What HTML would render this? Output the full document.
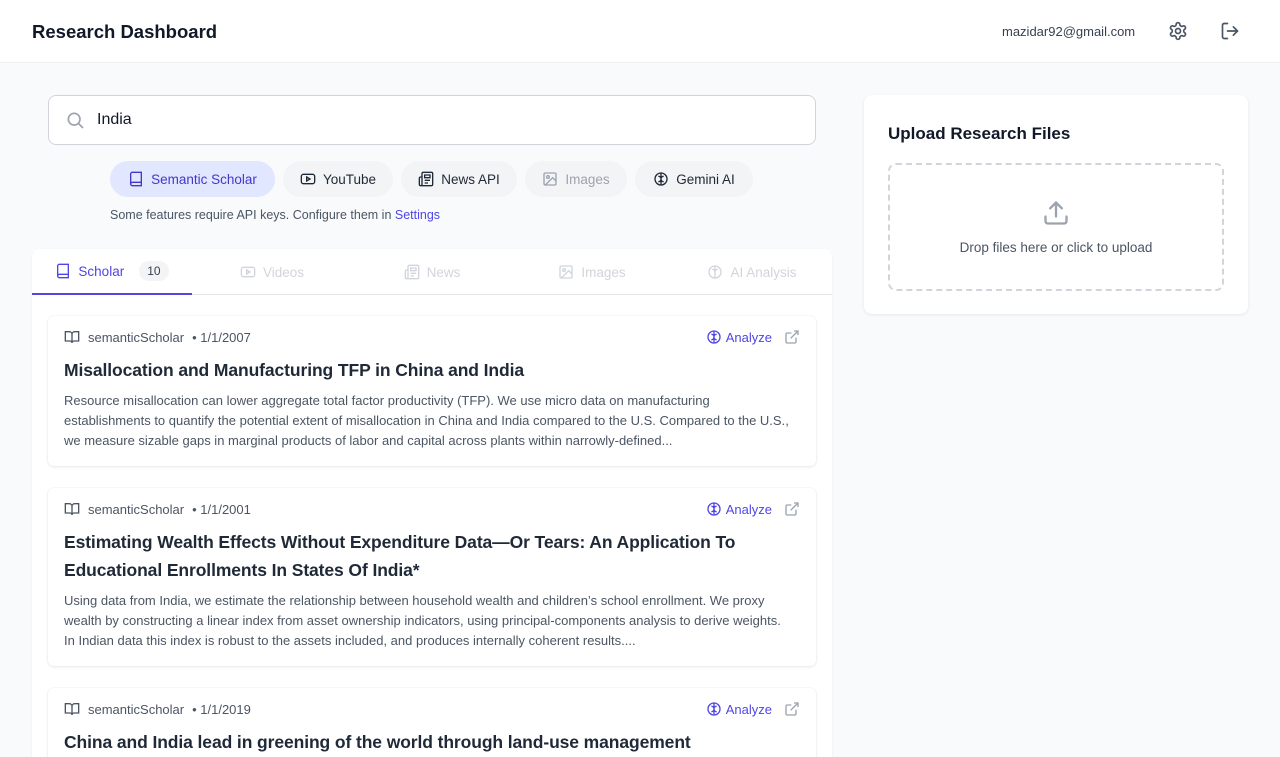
<!DOCTYPE html>
<html><head><meta charset="utf-8"><style>
*{box-sizing:border-box;margin:0;padding:0}
html,body{width:1280px;height:757px;overflow:hidden}
body{background:#f9fafb;font-family:"Liberation Sans",sans-serif;color:#111827;position:relative}
.hdr{position:absolute;left:0;top:0;width:1280px;height:63px;background:#fff;border-bottom:1px solid #eceef1}
.hdr h1{position:absolute;left:32px;top:21px;font-size:18.5px;font-weight:700;color:#111827}
.email{position:absolute;left:1002px;top:24px;font-size:13px;color:#374151}
svg{display:block}
.ic{position:absolute}
.search{position:absolute;left:48px;top:95px;width:768px;height:50px;background:#fff;border:1px solid #d1d5db;border-radius:8px}
.search span{position:absolute;left:48px;top:15px;font-size:16px;color:#111827}
.pill{position:absolute;top:161px;height:36px;border-radius:18px;background:#f3f4f6;font-size:13.5px;color:#1f2937;display:flex;align-items:center;justify-content:center;gap:7px;white-space:nowrap}
.pill.act{background:#e0e7ff;color:#4338ca}
.pill.dis{color:#9ca3af}
.note{position:absolute;left:110px;top:208px;font-size:12.5px;color:#4b5563}
.note a{color:#4f46e5;text-decoration:none}
.panel{position:absolute;left:32px;top:249px;width:800px;height:508px;background:#fff;border-radius:8px 8px 0 0;box-shadow:0 1px 2px rgba(0,0,0,.06);overflow:hidden}
.tabs{position:absolute;left:0;top:0;width:800px;height:46px;border-bottom:1px solid #e5e7eb}
.tab{position:absolute;top:0;width:160px;height:46px;display:flex;align-items:center;justify-content:center;gap:7px;font-size:13.5px;color:#d1d5db;white-space:nowrap}
.tab.act{color:#4f46e5;border-bottom:2px solid #4f46e5}
.badge{background:#f3f4f6;color:#374151;font-size:12px;border-radius:10px;padding:3px 8px;margin-left:8px}
.card{position:absolute;left:16px;width:768px;background:#fff;border-radius:6px;box-shadow:0 1px 3px rgba(0,0,0,.08),0 0 0 1px rgba(0,0,0,.02)}
.meta{position:absolute;left:16px;top:13px;font-size:13px;color:#4b5563;display:flex;align-items:center;gap:8px}
.an{position:absolute;right:44px;top:13px;font-size:13px;color:#4f46e5;display:flex;align-items:center;gap:4px}
.ext{position:absolute;right:16px;top:13px}
.title{position:absolute;left:16px;font-size:17.5px;font-weight:700;color:#1f2937;line-height:28px;width:730px;letter-spacing:-0.1px}
.abs{position:absolute;left:16px;font-size:13px;color:#4b5563;line-height:20px;width:728px}
.up{position:absolute;left:864px;top:95px;width:384px;height:219px;background:#fff;border-radius:8px;box-shadow:0 1px 3px rgba(0,0,0,.08)}
.up h2{position:absolute;left:24px;top:29px;font-size:17px;font-weight:700}
.drop{position:absolute;left:24px;top:68px;width:336px;height:128px;border:2px dashed #d1d5db;border-radius:8px}
.drop span{position:absolute;left:0;width:100%;top:75px;text-align:center;font-size:13.5px;color:#4b5563}
</style></head><body>
<div class="hdr"><h1>Research Dashboard</h1>
<div class="email">mazidar92@gmail.com</div>
<svg class="ic" style="left:1168px;top:21px" width="20" height="20" viewBox="0 0 24 24" fill="none" stroke="#4b5563" stroke-width="2" stroke-linecap="round" stroke-linejoin="round"><path d="M12.22 2h-.44a2 2 0 0 0-2 2v.18a2 2 0 0 1-1 1.73l-.43.25a2 2 0 0 1-2 0l-.15-.08a2 2 0 0 0-2.730.73l-.22.38a2 2 0 0 0 .73 2.730l.15.1a2 2 0 0 1 1 1.72v.51a2 2 0 0 1-1 1.74l-.15.09a2 2 0 0 0-.73 2.73l.22.38a2 2 0 0 0 2.73.73l.15-.08a2 2 0 0 1 2 0l.43.25a2 2 0 0 1 1 1.73V20a2 2 0 0 0 2 2h.44a2 2 0 0 0 2-2v-.18a2 2 0 0 1 1-1.73l.43-.25a2 2 0 0 1 2 0l.15.08a2 2 0 0 0 2.73-.73l.22-.39a2 2 0 0 0-.73-2.73l-.15-.08a2 2 0 0 1-1-1.74v-.5a2 2 0 0 1 1-1.74l.15-.09a2 2 0 0 0 .73-2.730l-.22-.38a2 2 0 0 0-2.73-.73l-.15.08a2 2 0 0 1-2 0l-.43-.25a2 2 0 0 1-1-1.73V4a2 2 0 0 0-2-2z"/><circle cx="12" cy="12" r="3"/></svg>
<svg class="ic" style="left:1220px;top:21px" width="20" height="20" viewBox="0 0 24 24" fill="none" stroke="#4b5563" stroke-width="2" stroke-linecap="round" stroke-linejoin="round"><path d="M9 21H5a2 2 0 0 1-2-2V5a2 2 0 0 1 2-2h4"/><path d="M16 17l5-5-5-5"/><path d="M21 12H9"/></svg>
</div>

<div class="search"><svg class="ic" style="left:16px;top:14px" width="20" height="20" viewBox="0 0 24 24" fill="none" stroke="#9ca3af" stroke-width="2" stroke-linecap="round"><circle cx="11" cy="11" r="7"/><path d="M21 21l-4.3-4.3"/></svg><span>India</span></div>

<div class="pill act" style="left:110px;width:165px"><svg width="16" height="16" viewBox="0 0 24 24" fill="none" stroke="#4338ca" stroke-width="2"><path d="M4 19.5V4.5A2.5 2.5 0 0 1 6.5 2H20v20H6.5A2.5 2.5 0 0 1 4 19.5zM4 19.5A2.5 2.5 0 0 1 6.5 17H20"/></svg>Semantic Scholar</div>
<div class="pill" style="left:283px;width:110px"><svg width="16" height="16" viewBox="0 0 24 24" fill="none" stroke="#1f2937" stroke-width="2"><rect x="2" y="5" width="20" height="14" rx="3"/><path d="M10 9l5 3-5 3z"/></svg>YouTube</div>
<div class="pill" style="left:401px;width:116px"><svg width="16" height="16" viewBox="0 0 24 24" fill="none" stroke="#1f2937" stroke-width="2"><path d="M4 22h16a2 2 0 0 0 2-2V4a2 2 0 0 0-2-2H8a2 2 0 0 0-2 2v16a2 2 0 0 1-4 0V11a2 2 0 0 1 2-2h2M18 14h-8M15 18h-5M10 6h8v4h-8z"/></svg>News API</div>
<div class="pill dis" style="left:525px;width:102px"><svg width="16" height="16" viewBox="0 0 24 24" fill="none" stroke="#9ca3af" stroke-width="2"><rect x="3" y="3" width="18" height="18" rx="2"/><circle cx="9" cy="9" r="2"/><path d="M21 15l-5-5L5 21"/></svg>Images</div>
<div class="pill" style="left:635px;width:118px"><svg width="16" height="16" viewBox="0 0 24 24" fill="none" stroke="#1f2937" stroke-width="2"><circle cx="12" cy="12" r="9"/><path d="M12 3v18M8 8c2 0 4 1 4 4M16 8c-2 0-4 1-4 4M8 16c2 0 4-1 4-4M16 16c-2 0-4-1-4-4"/></svg>Gemini AI</div>
<div class="note">Some features require API keys. Configure them in <a>Settings</a></div>

<div class="panel">
<div class="tabs">
<div class="tab act" style="left:0"><svg width="16" height="16" viewBox="0 0 24 24" fill="none" stroke="#4f46e5" stroke-width="2"><path d="M4 19.5V4.5A2.5 2.5 0 0 1 6.5 2H20v20H6.5A2.5 2.5 0 0 1 4 19.5zM4 19.5A2.5 2.5 0 0 1 6.5 17H20"/></svg>Scholar<span class="badge">10</span></div>
<div class="tab" style="left:160px"><svg width="16" height="16" viewBox="0 0 24 24" fill="none" stroke="#d1d5db" stroke-width="2"><rect x="2" y="5" width="20" height="14" rx="3"/><path d="M10 9l5 3-5 3z"/></svg>Videos</div>
<div class="tab" style="left:320px"><svg width="16" height="16" viewBox="0 0 24 24" fill="none" stroke="#d1d5db" stroke-width="2"><path d="M4 22h16a2 2 0 0 0 2-2V4a2 2 0 0 0-2-2H8a2 2 0 0 0-2 2v16a2 2 0 0 1-4 0V11a2 2 0 0 1 2-2h2M18 14h-8M15 18h-5M10 6h8v4h-8z"/></svg>News</div>
<div class="tab" style="left:480px"><svg width="16" height="16" viewBox="0 0 24 24" fill="none" stroke="#d1d5db" stroke-width="2"><rect x="3" y="3" width="18" height="18" rx="2"/><circle cx="9" cy="9" r="2"/><path d="M21 15l-5-5L5 21"/></svg>Images</div>
<div class="tab" style="left:640px"><svg width="16" height="16" viewBox="0 0 24 24" fill="none" stroke="#d1d5db" stroke-width="2"><circle cx="12" cy="12" r="9"/><path d="M12 3v18M8 8c2 0 4 1 4 4M16 8c-2 0-4 1-4 4"/></svg>AI Analysis</div>
</div>

<div class="card" style="top:67px;height:150px">
<div class="meta"><svg width="16" height="16" viewBox="0 0 24 24" fill="none" stroke="#4b5563" stroke-width="2"><path d="M2 4h6a4 4 0 0 1 4 4v13a3 3 0 0 0-3-3H2zM22 4h-6a4 4 0 0 0-4 4v13a3 3 0 0 1 3-3h7z"/></svg>semanticScholar <span>• 1/1/2007</span></div>
<div class="an"><svg width="16" height="16" viewBox="0 0 24 24" fill="none" stroke="#4f46e5" stroke-width="2"><circle cx="12" cy="12" r="9"/><path d="M12 3v18M8 8c2 0 4 1 4 4M16 8c-2 0-4 1-4 4M8 16c2 0 4-1 4-4M16 16c-2 0-4-1-4-4"/></svg>Analyze</div>
<svg class="ext" width="16" height="16" viewBox="0 0 24 24" fill="none" stroke="#9ca3af" stroke-width="2"><path d="M18 13v6a2 2 0 0 1-2 2H5a2 2 0 0 1-2-2V8a2 2 0 0 1 2-2h6M15 3h6v6M10 14L21 3"/></svg>
<div class="title" style="top:40px">Misallocation and Manufacturing TFP in China and India</div>
<div class="abs" style="top:75px">Resource misallocation can lower aggregate total factor productivity (TFP). We use micro data on manufacturing establishments to quantify the potential extent of misallocation in China and India compared to the U.S. Compared to the U.S., we measure sizable gaps in marginal products of labor and capital across plants within narrowly-defined...</div>
</div>

<div class="card" style="top:239px;height:178px">
<div class="meta"><svg width="16" height="16" viewBox="0 0 24 24" fill="none" stroke="#4b5563" stroke-width="2"><path d="M2 4h6a4 4 0 0 1 4 4v13a3 3 0 0 0-3-3H2zM22 4h-6a4 4 0 0 0-4 4v13a3 3 0 0 1 3-3h7z"/></svg>semanticScholar <span>• 1/1/2001</span></div>
<div class="an"><svg width="16" height="16" viewBox="0 0 24 24" fill="none" stroke="#4f46e5" stroke-width="2"><circle cx="12" cy="12" r="9"/><path d="M12 3v18M8 8c2 0 4 1 4 4M16 8c-2 0-4 1-4 4M8 16c2 0 4-1 4-4M16 16c-2 0-4-1-4-4"/></svg>Analyze</div>
<svg class="ext" width="16" height="16" viewBox="0 0 24 24" fill="none" stroke="#9ca3af" stroke-width="2"><path d="M18 13v6a2 2 0 0 1-2 2H5a2 2 0 0 1-2-2V8a2 2 0 0 1 2-2h6M15 3h6v6M10 14L21 3"/></svg>
<div class="title" style="top:40px">Estimating Wealth Effects Without Expenditure Data—Or Tears: An Application To Educational Enrollments In States Of India*</div>
<div class="abs" style="top:103px">Using data from India, we estimate the relationship between household wealth and children’s school enrollment. We proxy wealth by constructing a linear index from asset ownership indicators, using principal-components analysis to derive weights. In Indian data this index is robust to the assets included, and produces internally coherent results....</div>
</div>

<div class="card" style="top:439px;height:120px">
<div class="meta"><svg width="16" height="16" viewBox="0 0 24 24" fill="none" stroke="#4b5563" stroke-width="2"><path d="M2 4h6a4 4 0 0 1 4 4v13a3 3 0 0 0-3-3H2zM22 4h-6a4 4 0 0 0-4 4v13a3 3 0 0 1 3-3h7z"/></svg>semanticScholar <span>• 1/1/2019</span></div>
<div class="an"><svg width="16" height="16" viewBox="0 0 24 24" fill="none" stroke="#4f46e5" stroke-width="2"><circle cx="12" cy="12" r="9"/><path d="M12 3v18M8 8c2 0 4 1 4 4M16 8c-2 0-4 1-4 4M8 16c2 0 4-1 4-4M16 16c-2 0-4-1-4-4"/></svg>Analyze</div>
<svg class="ext" width="16" height="16" viewBox="0 0 24 24" fill="none" stroke="#9ca3af" stroke-width="2"><path d="M18 13v6a2 2 0 0 1-2 2H5a2 2 0 0 1-2-2V8a2 2 0 0 1 2-2h6M15 3h6v6M10 14L21 3"/></svg>
<div class="title" style="top:40px">China and India lead in greening of the world through land-use management</div>
</div>
</div>

<div class="up"><h2>Upload Research Files</h2>
<div class="drop"><svg class="ic" style="left:152px;top:34px" width="28" height="28" viewBox="0 0 24 24" fill="none" stroke="#9ca3af" stroke-width="2" stroke-linecap="round" stroke-linejoin="round"><path d="M21 15v4a2 2 0 0 1-2 2H5a2 2 0 0 1-2-2v-4M17 8l-5-5-5 5M12 3v12"/></svg><span>Drop files here or click to upload</span></div>
</div>
</body></html>
